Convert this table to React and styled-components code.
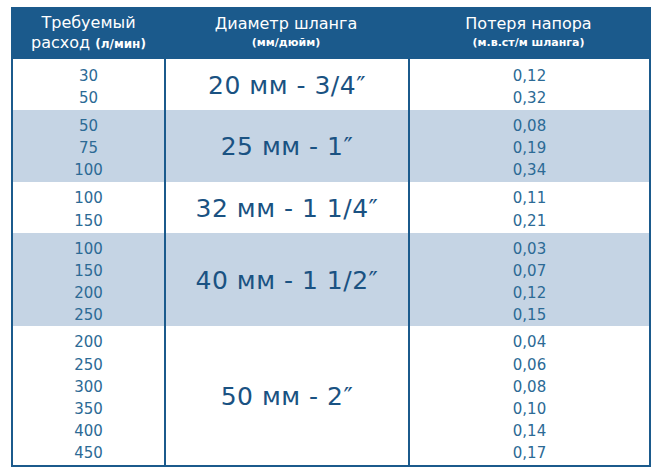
import React from "react";
import styled, { createGlobalStyle } from "styled-components";

const GlobalStyle = createGlobalStyle`
  html, body {
    margin: 0;
    padding: 0;
    background: #fff;
  }
  body {
    font-family: "DejaVu Sans", Verdana, sans-serif;
  }
`;

const Page = styled.div`
  width: 660px;
  height: 469px;
  padding: 7px 0 0 11px;
  box-sizing: border-box;
`;

const Table = styled.div`
  width: 640px;
  border: 2px solid #1b5a8c;
  box-sizing: border-box;
  background: #fff;
`;

const Row = styled.div`
  display: grid;
  grid-template-columns: 151px 244px 1fr;
  min-height: 51px;
  background: ${p => (p.shaded ? "#c5d4e4" : "#fff")};
`;

const HeadRow = styled(Row)`
  background: #1b5a8c;
  min-height: 0;
  height: 50px;
  color: #fff;
`;

const HeadCell = styled.div`
  display: flex;
  flex-direction: column;
  align-items: center;
  justify-content: center;
  text-align: center;
  font-size: 16px;
  line-height: 20px;
  padding-bottom: 2px;
`;

const Small = styled.span`
  font-size: ${p => p.size || 11}px;
  font-weight: bold;
  line-height: 18px;
`;

const Cell = styled.div`
  display: flex;
  flex-direction: column;
  align-items: center;
  justify-content: center;
  padding: 5px 0 0;
  font-size: 15px;
  line-height: 22.2px;
  color: #2c6a95;
  border-left: ${p => (p.divided ? "2px solid #1b5a8c" : "none")};
`;

const Size = styled(Cell)`
  font-size: 25px;
  line-height: 30px;
  letter-spacing: 0.5px;
  color: #1a5282;
  padding: 3px 0 0;
`;

const groups = [
  { flow: ["30", "50"], size: "20 мм - 3/4″", loss: ["0,12", "0,32"] },
  { flow: ["50", "75", "100"], size: "25 мм - 1″", loss: ["0,08", "0,19", "0,34"] },
  { flow: ["100", "150"], size: "32 мм - 1 1/4″", loss: ["0,11", "0,21"] },
  {
    flow: ["100", "150", "200", "250"],
    size: "40 мм - 1 1/2″",
    loss: ["0,03", "0,07", "0,12", "0,15"]
  },
  {
    flow: ["200", "250", "300", "350", "400", "450"],
    size: "50 мм - 2″",
    loss: ["0,04", "0,06", "0,08", "0,10", "0,14", "0,17"]
  }
];

export default function App() {
  return (
    <Page>
      <GlobalStyle />
      <Table>
        <HeadRow>
          <HeadCell>
            <span>Требуемый</span>
            <span>
              расход <Small size={12}>(л/мин)</Small>
            </span>
          </HeadCell>
          <HeadCell>
            <span>Диаметр шланга</span>
            <Small>(мм/дюйм)</Small>
          </HeadCell>
          <HeadCell>
            <span>Потеря напора</span>
            <Small>(м.в.ст/м шланга)</Small>
          </HeadCell>
        </HeadRow>
        {groups.map((g, i) => (
          <Row key={i} shaded={i % 2 === 1}>
            <Cell>
              {g.flow.map(v => (
                <span key={v}>{v}</span>
              ))}
            </Cell>
            <Size divided>{g.size}</Size>
            <Cell divided>
              {g.loss.map(v => (
                <span key={v}>{v}</span>
              ))}
            </Cell>
          </Row>
        ))}
      </Table>
    </Page>
  );
}
